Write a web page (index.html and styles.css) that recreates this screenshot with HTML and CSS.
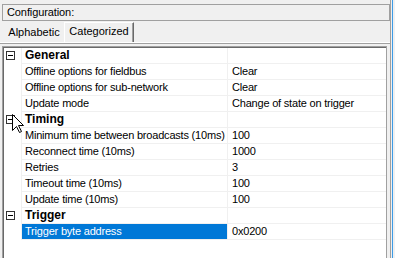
FILE: index.html
```html
<!DOCTYPE html>
<html lang="en">
<head>
    <meta charset="UTF-8">
    <title>Configuration</title>
    <link rel="stylesheet" href="styles.css">
</head>
<body>
    <div class="window">
        <div class="main">
            <div class="config-bar">Configuration:</div>
            <div class="tabs">
                <div class="tab">Alphabetic</div>
                <div class="tab active">Categorized</div>
            </div>
            <div class="panel">
                <div class="grid">
                    <div class="row category">
                        <div class="gutter"><span class="toggle"></span></div>
                        <div class="name">General</div>
                        <div class="value"></div>
                    </div>
                    <div class="row">
                        <div class="gutter"></div>
                        <div class="name">Offline options for fieldbus</div>
                        <div class="value">Clear</div>
                    </div>
                    <div class="row">
                        <div class="gutter"></div>
                        <div class="name">Offline options for sub-network</div>
                        <div class="value">Clear</div>
                    </div>
                    <div class="row">
                        <div class="gutter"></div>
                        <div class="name">Update mode</div>
                        <div class="value">Change of state on trigger</div>
                    </div>
                    <div class="row category">
                        <div class="gutter"><span class="toggle"></span></div>
                        <div class="name">Timing</div>
                        <div class="value"></div>
                    </div>
                    <div class="row">
                        <div class="gutter"></div>
                        <div class="name">Minimum time between broadcasts (10ms)</div>
                        <div class="value">100</div>
                    </div>
                    <div class="row">
                        <div class="gutter"></div>
                        <div class="name">Reconnect time (10ms)</div>
                        <div class="value">1000</div>
                    </div>
                    <div class="row">
                        <div class="gutter"></div>
                        <div class="name">Retries</div>
                        <div class="value">3</div>
                    </div>
                    <div class="row">
                        <div class="gutter"></div>
                        <div class="name">Timeout time (10ms)</div>
                        <div class="value">100</div>
                    </div>
                    <div class="row">
                        <div class="gutter"></div>
                        <div class="name">Update time (10ms)</div>
                        <div class="value">100</div>
                    </div>
                    <div class="row category">
                        <div class="gutter"><span class="toggle"></span></div>
                        <div class="name">Trigger</div>
                        <div class="value"></div>
                    </div>
                    <div class="row selected">
                        <div class="gutter"></div>
                        <div class="name">Trigger byte address</div>
                        <div class="value">0x0200</div>
                    </div>
                </div>
            </div>
        </div>
        <div class="edge"><div class="edge-line"></div></div>

        <!-- mouse pointer over the Timing toggle -->
        <svg class="cursor" width="13" height="20" viewBox="0 0 13 20">
            <path d="M0.5 0.5 L0.5 16.5 L4.5 12.5 L7.5 18.5 L9.5 17.5 L6.5 11.5 L11.5 11.5 Z" fill="#fff" stroke="#000" stroke-width="1"/>
        </svg>
    </div>
</body>
</html>
```

FILE: styles.css
```css
body {
    margin: 0;
    background: #f0f0f0;
    font-family: "Liberation Sans", Arial, sans-serif;
    font-size: 11px;
    color: #000;
}
.window {
    display: flex;
    width: 395px;
    height: 258px;
    overflow: hidden;
    position: relative;
}
.main {
    width: 390px;
    display: flex;
    flex-direction: column;
}
.edge {
    width: 5px;
    border-left: 1px solid #a0a0a0;
    box-sizing: border-box;
    padding-left: 1px;
}
.edge-line {
    width: 1px;
    height: 100%;
    background: #3c9be6;
}
.config-bar {
    margin: 4px 0 0 2px;
    width: 388px;
    height: 17px;
    box-sizing: border-box;
    border: 1px solid #a0a0a0;
    padding-left: 4px;
    line-height: 15px;
    letter-spacing: -0.1px;
}
.tabs {
    display: flex;
    align-items: flex-end;
    height: 21px;
    padding-left: 4px;
}
.tab {
    width: 60px;
    height: 18px;
    line-height: 17px;
    text-align: center;
}
.tab.active {
    width: 70px;
    height: 20px;
    box-sizing: border-box;
    border-top: 1px solid #fff;
    border-left: 1px solid #fff;
    border-right: 1px solid #696969;
    box-shadow: inset -1px 0 0 #a0a0a0;
}
.panel {
    flex: 1;
    border-top: 1px solid #fff;
    box-shadow: inset 0 1px 0 #a0a0a0;
    padding: 3px 0 0 2px;
}
.grid {
    width: 385px;
    height: 100%;
    box-sizing: border-box;
    background: #fff;
    border-top: 1px solid #a0a0a0;
    border-left: 1px solid #a0a0a0;
    border-right: 1px solid #a0a0a0;
    box-shadow: inset 1px 1px 0 #696969;
    padding: 1px 0 0 1px;
}
.row {
    display: grid;
    grid-template-columns: 18px 205px 1fr;
    height: 16px;
}
.gutter {
    border-right: 1px solid #f0f0f0;
}
.name,
.value {
    line-height: 15px;
    border-bottom: 1px solid #f0f0f0;
    white-space: nowrap;
    overflow: hidden;
    letter-spacing: -0.2px;
}
.name {
    padding-left: 3px;
}
.value {
    border-left: 1px solid #f0f0f0;
    padding-left: 4px;
}
.category .name {
    font-size: 12px;
    font-weight: bold;
    letter-spacing: 0;
}
.selected .name {
    background: #0078d7;
    color: #fff;
}
.toggle {
    display: block;
    position: relative;
    width: 9px;
    height: 9px;
    box-sizing: border-box;
    margin: 3px 0 0 2px;
    border: 1px solid #333;
}
.toggle::after {
    content: "";
    position: absolute;
    left: 1px;
    top: 3px;
    width: 5px;
    height: 1px;
    background: #000;
}
.cursor {
    position: absolute;
    left: 12px;
    top: 114px;
}
```
